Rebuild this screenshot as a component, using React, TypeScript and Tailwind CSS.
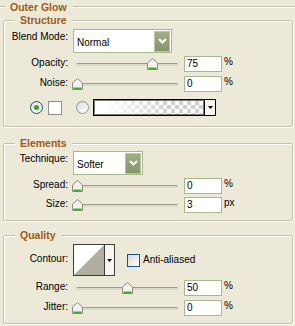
import React from "react";

const titleCls = "text-[10.5px] font-bold leading-[14px] text-[#a05a14]";

function Groove({ className = "" }: { className?: string }) {
  return <div className={`h-0 border-t border-b border-t-[#c3c0af] border-b-white ${className}`} />;
}

function Group({ title, className = "", children }: { title: string; className?: string; children: React.ReactNode }) {
  return (
    <fieldset
      className={`ml-[3px] w-[290px] rounded-[2px] border border-[#c3c0af] shadow-[inset_1px_1px_0_#fff,1px_1px_0_#fff] ${className}`}
    >
      <legend className={`ml-[11px] bg-[#ECE9D8] px-[5px] ${titleCls}`}>{title}</legend>
      {children}
    </fieldset>
  );
}

function Label({ text, top = false }: { text: string; top?: boolean }) {
  return (
    <span className={`w-[64px] shrink-0 text-right leading-[12px] ${top ? "mt-[2px] self-start" : "pb-[2px]"}`}>
      {text}
    </span>
  );
}

function Thumb() {
  return (
    <svg width="11" height="12" viewBox="0 0 11 12" className="block">
      <path d="M0.5 5 L5.5 0.5 L10.5 5 L10.5 11.5 L0.5 11.5 Z" fill="#f3f2ec" stroke="#8c8a7c" />
      <path d="M1.5 10.5 H9.5" stroke="#3fae23" strokeWidth="2" />
    </svg>
  );
}

function Slider({ pct }: { pct: number }) {
  return (
    <div className="relative ml-[4px] h-[16px] w-[110px] shrink-0">
      <div className="absolute left-[4px] right-[4px] top-[7px] h-[3px] rounded-full border-t border-t-[#9f9c8c] bg-[#dcdacb]" />
      <div className="absolute top-[2px]" style={{ left: pct }}>
        <Thumb />
      </div>
    </div>
  );
}

function NumBox({ value }: { value: string }) {
  return (
    <div className="ml-[2px] flex h-[16px] w-[38px] shrink-0 items-center border border-[#a9b98e] bg-white pl-[2px] leading-[12px]">
      {value}
    </div>
  );
}

function SliderRow({ label, pct, value, unit, className = "" }: { label: string; pct: number; value: string; unit: string; className?: string }) {
  return (
    <div className={`flex h-[16px] items-center ${className}`}>
      <Label text={label} />
      <Slider pct={pct} />
      <NumBox value={value} />
      <span className="ml-[2px] self-start leading-[12px]">{unit}</span>
    </div>
  );
}

function Dropdown({ value, width }: { value: string; width: string }) {
  return (
    <div className={`ml-[5px] flex h-[24px] items-center justify-between border border-[#a9b98e] bg-white pl-[3px] pr-[1px] ${width}`}>
      <span className="mt-[4px] leading-[12px]">{value}</span>
      <div className="flex h-[21px] w-[16px] items-center justify-center border border-[#bcc6a6] bg-linear-to-b from-[#a1ad86] to-[#86956a]">
        <svg width="9" height="6" viewBox="0 0 9 6">
          <path d="M1 1 L4.5 4.5 L8 1" fill="none" stroke="#fff" strokeWidth="2" />
        </svg>
      </div>
    </div>
  );
}

function Caret() {
  return (
    <svg width="5" height="3" viewBox="0 0 5 3" className="block">
      <path d="M0 0 H5 L2.5 3 Z" fill="#000" />
    </svg>
  );
}

export default function App() {
  return (
    <div className="h-[326px] w-[295px] overflow-hidden bg-[#ECE9D8] font-['Liberation_Sans',Arial,sans-serif] text-[10px] text-black">
      <div className="flex h-[13px] items-center">
        <Groove className="w-[6px]" />
        <span className={`ml-[4px] ${titleCls} leading-[13px]`}>Outer Glow</span>
        <Groove className="ml-[6px] flex-1" />
      </div>

      <Group title="Structure" className="pb-[10px]">
        <div className="mt-[2px] flex h-[24px] items-center">
          <Label text="Blend Mode:" top />
          <Dropdown value="Normal" width="w-[99px]" />
        </div>
        <SliderRow label="Opacity:" pct={75} value="75" unit="%" className="mt-[3px]" />
        <SliderRow label="Noise:" pct={0} value="0" unit="%" className="mt-[4px]" />
        <div className="mt-[7px] flex h-[17px] items-center pl-[26px]">
          <div className="flex h-[13px] w-[13px] items-center justify-center rounded-full border border-[#1c5180] bg-linear-to-br from-[#dcdbd3] to-white">
            <div className="h-[5px] w-[5px] rounded-full bg-[#2aa52a]" />
          </div>
          <div className="ml-[5px] h-[14px] w-[14px] border border-[#8e8e8e] bg-white" />
          <div className="ml-[14px] h-[13px] w-[13px] rounded-full border border-[#7f98b3] bg-linear-to-br from-[#dcdbd3] to-white" />
          <div className="ml-[4px] flex h-[17px] w-[123px] border border-black">
            <div className="flex-1 border border-[#7a7a7a] bg-[image:linear-gradient(to_right,#fff_10%,rgba(255,255,255,0)_65%),repeating-conic-gradient(#d2d2d2_0%_25%,#fff_0%_50%)] bg-[length:100%_100%,8px_8px]" />
            <div className="flex w-[11px] items-center justify-center border-l border-black bg-[#f5f4ee]">
              <Caret />
            </div>
          </div>
        </div>
      </Group>

      <Group title="Elements" className="mt-[9px] pb-[7px]">
        <div className="mt-[1px] flex h-[24px] items-center">
          <Label text="Technique:" top />
          <Dropdown value="Softer" width="w-[70px]" />
        </div>
        <SliderRow label="Spread:" pct={0} value="0" unit="%" className="mt-[3px]" />
        <SliderRow label="Size:" pct={0} value="3" unit="px" className="mt-[3px]" />
      </Group>

      <Group title="Quality" className="mt-[7px] pb-[7px]">
        <div className="mt-[2px] flex h-[32px] items-center">
          <Label text="Contour:" />
          <div className="ml-[5px] flex h-[32px] w-[42px] border border-[#3c3c3c]">
            <svg width="30" height="30" viewBox="0 0 30 30" className="block bg-white">
              <path d="M0 30 L30 0 L30 30 Z" fill="#b2ae9f" />
            </svg>
            <div className="flex flex-1 items-center justify-center border-l border-[#3c3c3c] bg-[#f7f6f1]">
              <Caret />
            </div>
          </div>
          <div className="ml-[12px] h-[13px] w-[13px] border border-[#1c5180] bg-linear-to-br from-[#d8d7cf] to-white" />
          <span className="ml-[3px] leading-[12px]">Anti-aliased</span>
        </div>
        <SliderRow label="Range:" pct={50} value="50" unit="%" className="mt-[4px]" />
        <SliderRow label="Jitter:" pct={0} value="0" unit="%" className="mt-[4px]" />
      </Group>
    </div>
  );
}
